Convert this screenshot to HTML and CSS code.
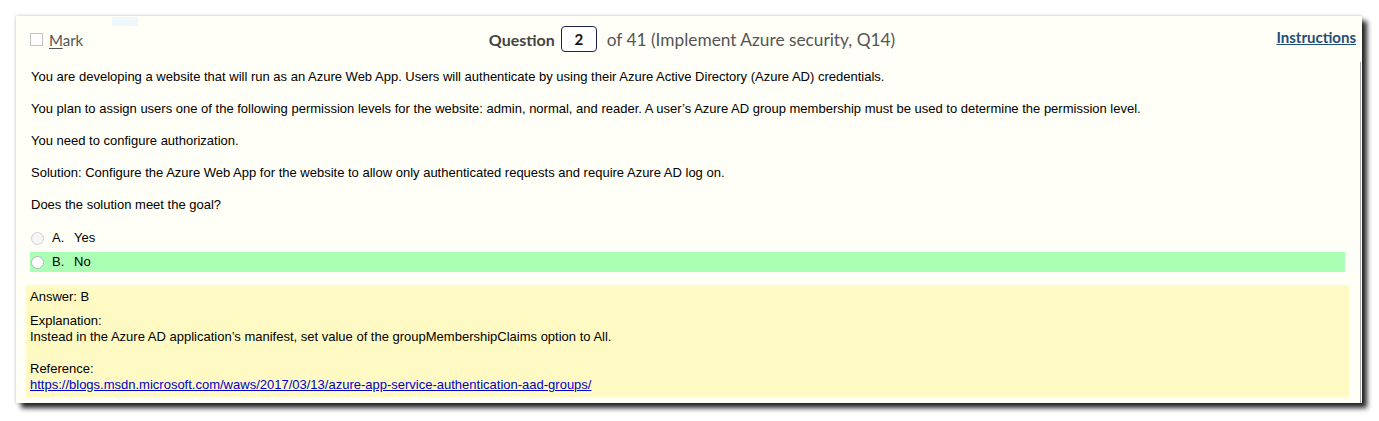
FILE: index.html
```html
<!DOCTYPE html>
<html lang="en">
<head>
<meta charset="utf-8">
<title>Question 2 of 41</title>
<link rel="stylesheet" href="styles.css">
</head>
<body>
<div class="panel">
  <span class="glint"></span>
  <div class="header">
    <label class="mark"><span class="checkbox"></span><span class="mark-text"><u>M</u>ark</span></label>
    <div class="qtitle">
      <span class="qword">Question</span>
      <span class="qnum">2</span>
      <span class="qof">of 41 (Implement Azure security, Q14)</span>
    </div>
    <a class="instructions" href="#">Instructions</a>
  </div>
  <div class="body">
    <p>You are developing a website that will run as an Azure Web App. Users will authenticate by using their Azure Active Directory (Azure AD) credentials.</p>
    <p>You plan to assign users one of the following permission levels for the website: admin, normal, and reader. A user’s Azure AD group membership must be used to determine the permission level.</p>
    <p>You need to configure authorization.</p>
    <p>Solution: Configure the Azure Web App for the website to allow only authenticated requests and require Azure AD log on.</p>
    <p>Does the solution meet the goal?</p>
    <ul class="options">
      <li class="option"><span class="radio"></span><span class="letter">A.</span><span>Yes</span></li>
      <li class="option correct"><span class="radio white"></span><span class="letter">B.</span><span>No</span></li>
    </ul>
    <div class="answer">
      <div class="answer-line">Answer: B</div>
      <div class="explain">Explanation:<br>Instead in the Azure AD application’s manifest, set value of the groupMembershipClaims option to All.<br><br>Reference:<br><a href="#">https://blogs.msdn.microsoft.com/waws/2017/03/13/azure-app-service-authentication-aad-groups/</a></div>
    </div>
  </div>
</div>
</body>
</html>
```
FILE: styles.css
```css
html, body {
  margin: 0;
  padding: 0;
  background: #ffffff;
}
body {
  padding: 16px 0 20px 16px;
  font-family: "Liberation Sans", Arial, sans-serif;
  font-size: 13px;
  color: #000;
}
.panel {
  position: relative;
  width: 1346px;
  background: #fffff7;
  box-shadow: 5px 5px 5px rgba(0, 0, 0, 0.85), 0 0 3px rgba(0, 0, 0, 0.25);
  display: flex;
  flex-direction: column;
}
.glint {
  position: absolute;
  left: 96px;
  top: 1px;
  width: 26px;
  height: 9px;
  background: #eef7fb;
}
.header {
  height: 46px;
  display: grid;
  grid-template-columns: 1fr auto 1fr;
  align-items: center;
  padding: 0 6px 0 14px;
  font-family: Lato, "Open Sans", sans-serif;
}
.mark {
  display: flex;
  align-items: center;
  gap: 6px;
  color: #555;
  font-size: 15px;
  padding-top: 1px;
}
.mark u {
  text-decoration-thickness: 1px;
  text-underline-offset: 2px;
}
.checkbox {
  width: 11px;
  height: 11px;
  border: 1px solid #c4c4c4;
  background: #fff;
}
.qtitle {
  display: flex;
  align-items: center;
  font-size: 16px;
  color: #555;
  margin-left: -2px;
}
.qword {
  font-weight: bold;
  color: #444;
}
.qnum {
  width: 34px;
  height: 24px;
  margin: 0 10px 0 6px;
  border: 1px solid #1a2352;
  border-radius: 4px;
  background: #fff;
  display: flex;
  align-items: center;
  justify-content: center;
  font-weight: bold;
  color: #111;
  font-size: 15px;
}
.qof {
  font-size: 17.3px;
}
.instructions {
  justify-self: end;
  font-size: 15px;
  font-weight: bold;
  color: #1f4e79;
  margin-top: -4px;
}
.body {
  margin-right: 1px;
  border-right: 1px solid #a8a8a8;
  padding: 7px 0 6px 0;
}
.body p {
  margin: 0 0 16px 15px;
  line-height: 16px;
}
.options {
  list-style: none;
  margin: -1px 15px 0 14px;
  padding: 0;
  display: flex;
  flex-direction: column;
  gap: 4px;
}
.option {
  height: 20px;
  display: flex;
  align-items: center;
  line-height: 20px;
  padding-left: 1px;
}
.option.correct {
  background: #aaffb4;
}
.radio {
  width: 11px;
  height: 11px;
  border: 1px solid #cfcfcf;
  border-radius: 50%;
  background: #f6f6f6;
  margin-right: 8px;
  margin-top: 1px;
}
.radio.white {
  background: #fff;
  border-color: #b5b5b5;
}
.letter {
  width: 22px;
}
.answer {
  margin: 13px 11px 0 10px;
  padding: 4px;
  background: #fffac3;
  line-height: 16px;
}
.answer-line {
  margin-bottom: 8px;
}
.explain a {
  color: #0000cc;
}
```
